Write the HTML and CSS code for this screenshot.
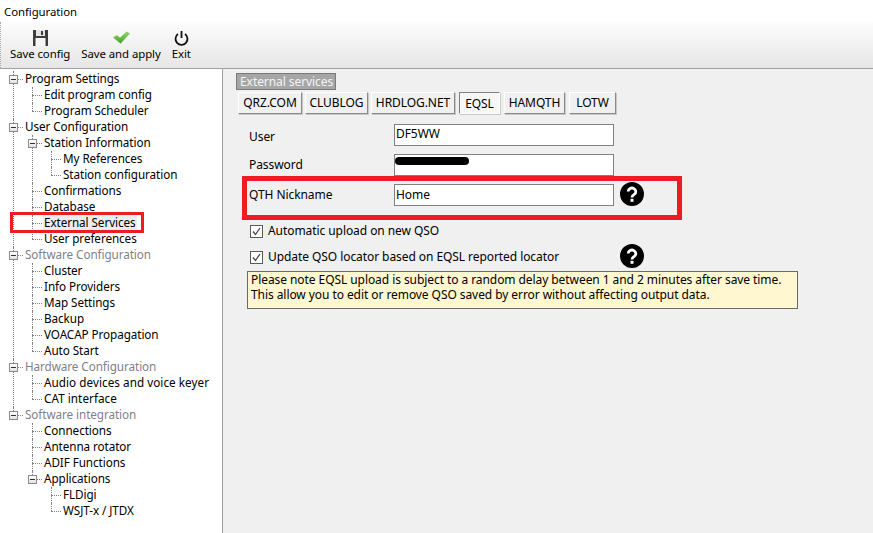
FILE: index.html
```html
<!DOCTYPE html>
<html lang="en">
<head>
<meta charset="utf-8">
<title>Configuration</title>
<link rel="stylesheet" href="styles.css">
</head>
<body>
<div class="titlebar">Configuration</div>
<div class="toolbar">
  <div class="tool tool-save">
    <svg class="tool-icon" width="17" height="16" viewBox="0 0 17 16"><path d="M1 0h15v16H1z" fill="#3c3c3c"/><path d="M3.500 8h10v8h-10z" fill="#f6f6f6"/><path d="M4 0h9v6H4z" fill="#e4e4e4"/><path d="M9 1h2v4H9z" fill="#3c3c3c"/></svg>
    <span>Save config</span>
  </div>
  <div class="tool tool-apply">
    <svg class="tool-icon" width="17" height="16" viewBox="0 0 17 16"><defs><linearGradient id="tick" x1="0" y1="0" x2="0" y2="1"><stop offset="0" stop-color="#8fdc5e"/><stop offset="1" stop-color="#3f9e2a"/></linearGradient></defs><path d="M0.500 7.500l3.500-2 3 2.500L13.500 2l3 1.500-9 10z" fill="url(#tick)" stroke="#62b83c" stroke-width=".5"/></svg>
    <span>Save and apply</span>
  </div>
  <div class="tool tool-exit">
    <svg class="tool-icon" width="17" height="16" viewBox="0 0 17 16"><path d="M5 4a6 6 0 1 0 7 0" fill="none" stroke="#111" stroke-width="1.800"/><path d="M8.500 1v7" stroke="#111" stroke-width="1.800"/></svg>
    <span>Exit</span>
  </div>
</div>
<div class="main">
  <nav class="sidebar">
    <div class="mark-tree"></div>
    <ul class="tree">
      <li class="branch"><span class="box"></span><span class="row">Program Settings</span>
        <ul>
          <li><span class="row">Edit program config</span></li>
          <li><span class="row">Program Scheduler</span></li>
        </ul>
      </li>
      <li class="branch"><span class="box"></span><span class="row">User Configuration</span>
        <ul>
          <li class="branch"><span class="box"></span><span class="row">Station Information</span>
            <ul>
              <li><span class="row">My References</span></li>
              <li><span class="row">Station configuration</span></li>
            </ul>
          </li>
          <li><span class="row">Confirmations</span></li>
          <li><span class="row">Database</span></li>
          <li><span class="row selected">External Services</span></li>
          <li><span class="row">User preferences</span></li>
        </ul>
      </li>
      <li class="branch"><span class="box"></span><span class="row dim">Software Configuration</span>
        <ul>
          <li><span class="row">Cluster</span></li>
          <li><span class="row">Info Providers</span></li>
          <li><span class="row">Map Settings</span></li>
          <li><span class="row">Backup</span></li>
          <li><span class="row">VOACAP Propagation</span></li>
          <li><span class="row">Auto Start</span></li>
        </ul>
      </li>
      <li class="branch"><span class="box"></span><span class="row dim">Hardware Configuration</span>
        <ul>
          <li><span class="row wide">Audio devices and voice keyer</span></li>
          <li><span class="row wide">CAT interface</span></li>
        </ul>
      </li>
      <li class="branch"><span class="box"></span><span class="row dim">Software integration</span>
        <ul>
          <li><span class="row">Connections</span></li>
          <li><span class="row">Antenna rotator</span></li>
          <li><span class="row">ADIF Functions</span></li>
          <li class="branch"><span class="box"></span><span class="row">Applications</span>
            <ul>
              <li><span class="row">FLDigi</span></li>
              <li><span class="row">WSJT-x / JTDX</span></li>
            </ul>
          </li>
        </ul>
      </li>
    </ul>
  </nav>
  <section class="content">
    <div class="mark-form"></div>
    <div class="section-label">External services</div>
    <div class="tabs">
      <div class="tab tab-qrz">QRZ.COM</div>
      <div class="tab tab-club">CLUBLOG</div>
      <div class="tab tab-hrd">HRDLOG.NET</div>
      <div class="tab tab-eqsl active">EQSL</div>
      <div class="tab tab-ham">HAMQTH</div>
      <div class="tab tab-lotw">LOTW</div>
    </div>
    <div class="form">
      <div class="field field-user"><label>User</label><div class="input">DF5WW</div></div>
      <div class="field"><label>Password</label><div class="input"><span class="redact"></span></div></div>
      <div class="field"><label>QTH Nickname</label><div class="input input-home">Home</div>
        <svg class="help" width="24" height="24" viewBox="0 0 24 24"><circle cx="12" cy="12" r="12" fill="#000"/><path d="M8.200 9.500a3.800 3.500 0 1 1 6 2.900c-1.500 1-2.200 1.500-2.200 3" fill="none" stroke="#fff" stroke-width="2.800"/><rect x="10.500" y="16.800" width="3" height="3" fill="#fff"/></svg>
      </div>
    </div>
    <div class="check check-first">
      <span class="checkbox"><svg width="11" height="11" viewBox="0 0 11 11"><path d="M2 5.500l2.500 3L9 2" fill="none" stroke="#444" stroke-width="1.300"/></svg></span>
      <span>Automatic upload on new QSO</span>
    </div>
    <div class="check check-second">
      <span class="checkbox"><svg width="11" height="11" viewBox="0 0 11 11"><path d="M2 5.500l2.500 3L9 2" fill="none" stroke="#444" stroke-width="1.300"/></svg></span>
      <span class="check-label">Update QSO locator based on EQSL reported locator</span>
      <svg class="help" width="24" height="24" viewBox="0 0 24 24"><circle cx="12" cy="12" r="12" fill="#000"/><path d="M8.200 9.500a3.800 3.500 0 1 1 6 2.900c-1.500 1-2.200 1.500-2.200 3" fill="none" stroke="#fff" stroke-width="2.800"/><rect x="10.500" y="16.800" width="3" height="3" fill="#fff"/></svg>
    </div>
    <div class="note">Please note EQSL upload is subject to a random delay between 1 and 2 minutes after save time.<br>This allow you to edit or remove QSO saved by error without affecting output data.</div>
  </section>
</div>
</body>
</html>
```
FILE: styles.css
```css
* { box-sizing: border-box; }
html, body { margin: 0; padding: 0; }
body {
  width: 873px;
  height: 533px;
  overflow: hidden;
  background: #f0f0f0;
  color: #000;
  font-family: "Noto Sans", sans-serif;
  font-size: 12px;
  letter-spacing: -0.07px;
  line-height: 16px;
  display: flex;
  flex-direction: column;
}
.titlebar { height: 22px; background: #fff; padding: 4px 0 0 4px; font-size: 11.4px; }
.toolbar {
  height: 46px;
  display: flex;
  padding-left: 9px;
  background: linear-gradient(#fdfdfd, #e6e6e6);
  border-left: 1px dotted #aaa;
  font-size: 11.4px;
}
.tool { display: flex; flex-direction: column; align-items: center; padding-top: 8px; margin-right: 11px; }
.tool-icon { display: block; height: 16px; }
.tool span { display: block; }
.main { flex: 1; display: flex; min-height: 0; border-top: 1px solid #a0a0a0; }
.sidebar {
  width: 223px;
  background: #fff;
  border-right: 1px solid #a0a0a0;
  padding: 2px 0 0 13px;
  position: relative;
  font-size: 11.7px;
}
.tree, .tree ul { list-style: none; margin: 0; padding: 0; }
.tree ul { margin-left: 7px; }
.tree li { position: relative; padding-left: 12px; }
.tree li::before {
  content: "";
  position: absolute;
  left: 0;
  top: 0;
  bottom: 0;
  border-left: 1px dotted #808080;
}
.tree li:last-child::before { bottom: auto; height: 8px; }
.tree li::after {
  content: "";
  position: absolute;
  left: 0;
  top: 8px;
  width: 10px;
  border-top: 1px dotted #808080;
}
.row { display: block; width: fit-content; height: 16px; line-height: 15px; padding: 0 1px; margin-left: -1px; white-space: nowrap; position: relative; }
.selected { background: #ececec; }
.wide { letter-spacing: 0.05px; }
.dim { color: #7f7f8a; }
.box {
  position: absolute;
  z-index: 1;
  left: -4px;
  top: 4px;
  width: 9px;
  height: 9px;
  background: linear-gradient(#fff, #dfe3ea);
  border: 1px solid #8a8a8a;
}
.box::after { content: ""; position: absolute; left: 1px; right: 1px; top: 3px; height: 1px; background: #333; }
.mark-tree { position: absolute; left: 10px; top: 143px; width: 134px; height: 21px; border: 3px solid #ed1c24; z-index: 2; }
.content { flex: 1; position: relative; padding: 4px 0 0 13px; }
.section-label {
  width: 100px;
  height: 17px;
  background: #a6a6a6;
  border: 1px solid #7a7a7a;
  color: #f4f4f4;
  padding-left: 3px;
  line-height: 15px;
}
.tabs { display: flex; margin: 2px 0 0 2px; gap: 3px; }
.tab {
  height: 22px;
  background: #f0f0f0;
  border: 1px solid;
  border-color: #fff #8a8a8a #8a8a8a #fff;
  box-shadow: 1px 1px 0 #c8c8c8;
  text-align: center;
  line-height: 20px;
}
.tab-qrz { width: 64px; }
.tab-club { width: 63px; }
.tab-hrd { width: 84px; }
.tab-eqsl { width: 41px; margin-left: 1px; }
.tab-ham { width: 61px; margin-left: 1px; }
.tab-lotw { width: 47px; margin-left: 1px; }
.active { border-color: #808080 #fff #fff #808080; background: #f7f7f7; line-height: 22px; }
.form { margin: 10px 0 0 13px; }
.field { display: flex; align-items: center; height: 22px; margin-bottom: 8px; }
.field label { width: 145px; }
.field-user label { padding-top: 3px; }
.input {
  width: 220px;
  height: 22px;
  background: #fff;
  border: 1px solid #808080;
  padding-left: 1px;
  line-height: 17px;
}
.input-home { line-height: 19px; }
.help { flex: none; margin-bottom: 2px; }
.field .help { margin-left: 6px; }
.redact { display: block; width: 74px; height: 8px; margin: 2px 0 0 -1px; background: #000; border-radius: 4px; }
.mark-form { position: absolute; left: 19px; top: 107px; width: 440px; height: 44px; border: 5px solid #ed1c24; }
.check { display: flex; align-items: center; margin-left: 14px; }
.check-first { height: 16px; margin-top: 17px; }
.check-second { height: 16px; margin-top: 10px; }
.checkbox { width: 13px; height: 13px; background: #fff; border: 1px solid #5a5a5a; margin-right: 5px; display: flex; align-items: center; justify-content: center; }
.check-label { width: 352px; }
.note {
  width: 551px;
  height: 38px;
  margin: 6px 0 0 11px;
  background: #fef7cf;
  border: 1px solid #6a6a6a;
  padding: 0 0 0 3px;
  line-height: 15px;
}
```
